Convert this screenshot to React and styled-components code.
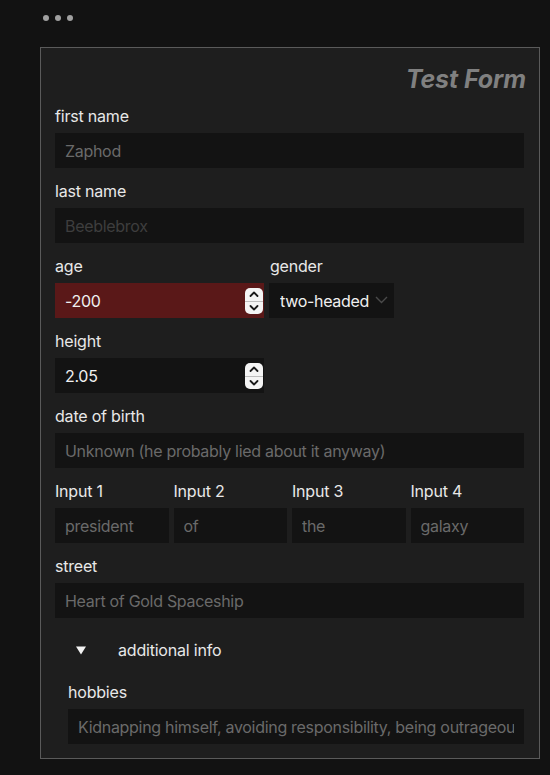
import React from "react";
import styled, { createGlobalStyle } from "styled-components";

const Global = createGlobalStyle`
  html, body { margin: 0; padding: 0; background: #121212; }
  body { font-family: Inter, "Noto Sans", "Liberation Sans", sans-serif; color: #e6e6e6; }
  * { box-sizing: border-box; }
`;

const Page = styled.div`
  width: 550px;
  height: 775px;
  background: #121212;
  padding: 12px 0 0 40px;
  overflow: hidden;
`;

const Dots = styled.div`
  display: flex;
  gap: 6px;
  height: 12px;
  align-items: center;
  padding-left: 3px;
  margin-bottom: 23px;
`;

const Dot = styled.span`
  width: 6px;
  height: 6px;
  border-radius: 50%;
  background: #a0a0a0;
`;

const Panel = styled.form`
  width: 500px;
  background: #1e1e1e;
  border: 1px solid #5a5a5a;
  padding: 17px 15px 14px 14px;
  display: flex;
  flex-direction: column;
`;

const Title = styled.h1`
  margin: 0 -2px 12px 0;
  text-align: right;
  font-size: 25px;
  line-height: 29px;
  font-weight: 700;
  font-style: italic;
  color: #808080;
  letter-spacing: -0.1px;
`;

const Field = styled.div`
  display: flex;
  flex-direction: column;
  gap: 7px;
  min-width: 0;
  margin-bottom: ${(p) => (p.last ? "0" : "13px")};
`;

const Label = styled.label`
  font-size: 16px;
  line-height: 19px;
  padding-top: 1px;
  letter-spacing: -0.2px;
  color: #e8e8e8;
  padding-left: ${(p) => (p.shift ? "1px" : "0")};
`;

const Input = styled.input`
  width: 100%;
  height: 35px;
  border: none;
  outline: none;
  background: ${(p) => (p.invalid ? "#5a1818" : "#131313")};
  color: #f0f0f0;
  font: inherit;
  font-size: 16px;
  letter-spacing: -0.3px;
  padding: 0 10px;
  &::placeholder { color: ${(p) => (p.dim ? "#3e3e3e" : "#6a6a6a")}; }
`;

const Row = styled.div`
  display: grid;
  grid-template-columns: ${(p) => p.cols};
  gap: 5px;
`;

const NumberWrap = styled.div`
  position: relative;
  width: 209px;
`;

const Spinner = styled.div`
  position: absolute;
  right: 1px;
  top: 5px;
  width: 18px;
  height: 26px;
  background: #f4f4f4;
  border-radius: 5px;
  display: flex;
  flex-direction: column;
  align-items: center;
  justify-content: space-between;
  padding: 3px 0;
  &::after {
    content: "";
    position: absolute;
    left: 0;
    right: 0;
    top: 12.5px;
    height: 1px;
    background: #bdbdbd;
  }
`;

const SelectWrap = styled.div`
  position: relative;
  width: 125px;
`;

const Select = styled.select`
  appearance: none;
  width: 100%;
  height: 35px;
  border: none;
  outline: none;
  background: #131313;
  color: #f0f0f0;
  font: inherit;
  font-size: 16px;
  letter-spacing: -0.3px;
  padding: 0 11px;
`;

const Chevron = styled.svg`
  position: absolute;
  right: 6px;
  top: 13px;
  pointer-events: none;
`;

const Details = styled.details`
  padding-left: 13px;
`;

const Summary = styled.summary`
  list-style: none;
  display: flex;
  align-items: center;
  gap: 32px;
  height: 38px;
  margin-left: -13px;
  padding-left: 21px;
  margin-bottom: 13px;
  font-size: 16px;
  letter-spacing: -0.2px;
  color: #e8e8e8;
  cursor: pointer;
  &::-webkit-details-marker { display: none; }
`;

const Arrow = () => (
  <svg width="10" height="9" viewBox="0 0 10 9">
    <path d="M0 0.5 H10 L5 8.5 Z" fill="#f2f2f2" />
  </svg>
);

const SpinUp = () => (
  <svg width="10" height="6" viewBox="0 0 10 6">
    <path d="M1.5 5 L5 1.5 L8.5 5" stroke="#1a1a1a" strokeWidth="1.8" fill="none" strokeLinecap="round" strokeLinejoin="round" />
  </svg>
);
const SpinDown = () => (
  <svg width="10" height="6" viewBox="0 0 10 6">
    <path d="M1.5 1 L5 4.5 L8.5 1" stroke="#1a1a1a" strokeWidth="1.8" fill="none" strokeLinecap="round" strokeLinejoin="round" />
  </svg>
);

const NumberInput = ({ value, invalid }) => (
  <NumberWrap>
    <Input defaultValue={value} invalid={invalid} />
    <Spinner>
      <SpinUp />
      <SpinDown />
    </Spinner>
  </NumberWrap>
);

export default function App() {
  return (
    <>
      <Global />
      <Page>
        <Dots>
          <Dot />
          <Dot />
          <Dot />
        </Dots>
        <Panel onSubmit={(e) => e.preventDefault()}>
          <Title>Test Form</Title>
          <Field>
            <Label>first name</Label>
            <Input placeholder="Zaphod" />
          </Field>
          <Field>
            <Label>last name</Label>
            <Input placeholder="Beeblebrox" dim />
          </Field>
          <Row cols="209px 125px">
            <Field>
              <Label>age</Label>
              <NumberInput value="-200" invalid />
            </Field>
            <Field>
              <Label shift>gender</Label>
              <SelectWrap>
                <Select defaultValue="two-headed">
                  <option>two-headed</option>
                </Select>
                <Chevron width="13" height="8" viewBox="0 0 13 8">
                  <path d="M1 1 L6.5 6.5 L12 1" stroke="#4a4a4a" strokeWidth="1.4" fill="none" />
                </Chevron>
              </SelectWrap>
            </Field>
          </Row>
          <Field>
            <Label>height</Label>
            <NumberInput value="2.05" />
          </Field>
          <Field>
            <Label>date of birth</Label>
            <Input placeholder="Unknown (he probably lied about it anyway)" />
          </Field>
          <Row cols="repeat(4, 1fr)">
            {[
              ["Input 1", "president"],
              ["Input 2", "of"],
              ["Input 3", "the"],
              ["Input 4", "galaxy"],
            ].map(([l, p]) => (
              <Field key={l}>
                <Label>{l}</Label>
                <Input placeholder={p} />
              </Field>
            ))}
          </Row>
          <Field>
            <Label>street</Label>
            <Input placeholder="Heart of Gold Spaceship" />
          </Field>
          <Details open>
            <Summary>
              <Arrow />
              additional info
            </Summary>
            <Field last>
              <Label>hobbies</Label>
              <Input placeholder="Kidnapping himself, avoiding responsibility, being outrageous" />
            </Field>
          </Details>
        </Panel>
      </Page>
    </>
  );
}
